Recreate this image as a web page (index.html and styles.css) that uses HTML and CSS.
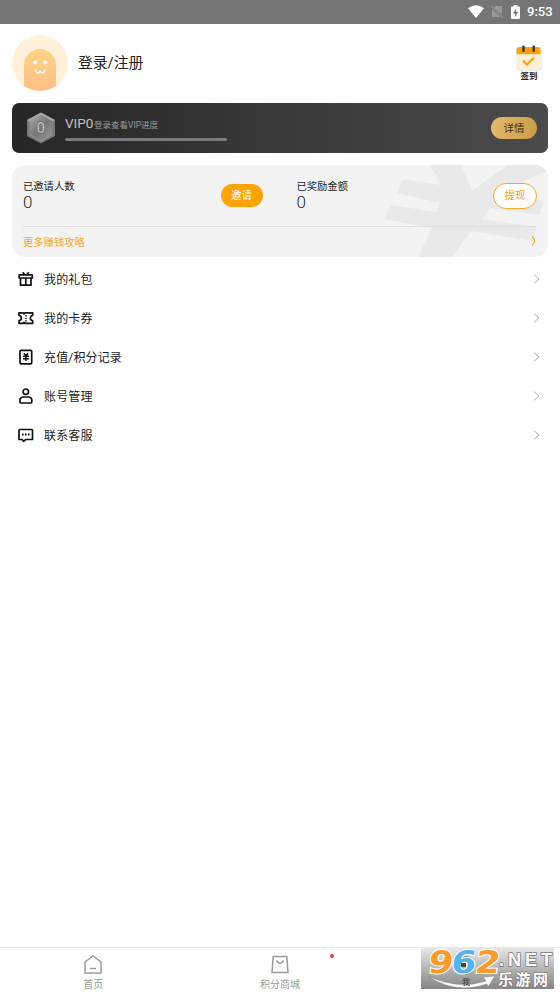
FILE: index.html
```html
<!DOCTYPE html>
<html lang="zh-CN">
<head>
<meta charset="utf-8">
<title>我的</title>
<link rel="stylesheet" href="styles.css">
</head>
<body>
<div class="screen">
  <header class="status">
    <svg width="16" height="13" viewBox="0 0 16 13"><path d="M0 3.2Q8-2.8 16 3.2L8 13Z" fill="#fff"/></svg>
    <svg class="sim" width="12" height="13" viewBox="0 0 12 13"><path d="M4.500 1H11V9.500L3 2.500ZM1 4L9.500 12H1Z" fill="#999"/><path d="M.3 1L11.700 12.500" stroke="#aaa" stroke-width="1"/></svg>
    <svg class="battery" width="9" height="14" viewBox="0 0 9 14"><path d="M2.700 0H6.300V1.500H8Q9 1.500 9 2.500V13Q9 14 8 14H1Q0 14 0 13V2.500Q0 1.500 1 1.500H2.700Z" fill="#fff"/><path d="M5.200 3.400L2 8.400H4.100V12L7.200 7H5.200Z" fill="#777"/></svg>
    <span class="clock">9:53</span>
  </header>

  <section class="profile">
    <svg class="avatar" width="56" height="56" viewBox="0 0 56 56">
      <defs>
        <linearGradient id="body" x2="0" y2="1"><stop stop-color="#fbd583"/><stop offset="1" stop-color="#fdbd88"/></linearGradient>
        <clipPath id="round"><circle cx="28" cy="28" r="28"/></clipPath>
      </defs>
      <circle cx="28" cy="28" r="28" fill="#fef0d9"/>
      <path d="M12 56V30A16 16 0 0 1 44 30V56Z" fill="url(#body)" clip-path="url(#round)"/>
      <circle cx="23" cy="27.500" r="2" fill="#fff"/><circle cx="33.200" cy="27.500" r="2" fill="#fff"/>
      <path d="M23.500 35Q24 38 26 38T28.200 35.500Q28.500 38 30.500 38T33 35" fill="none" stroke="#fff" stroke-width="1.400" stroke-linecap="round"/>
    </svg>
    <span class="login">登录/注册</span>
    <div class="sign">
      <svg width="26" height="26" viewBox="0 0 26 26"><rect x="1" y="3" width="25" height="23" rx="3" fill="#ededed"/><rect x=".5" y="2" width="24" height="22.500" rx="3" fill="#fef0d8"/><path d="M.5 9.200V5Q.5 2 3.500 2H21.500Q24.500 2 24.500 5V9.200Z" fill="#f9a10c"/><path d="M7.500 1.700V5.800M17.700 1.700V5.800" stroke="#38312a" stroke-width="2.400" stroke-linecap="round"/><path d="M7 15.500L11 19.500L18 12.800" fill="none" stroke="#f9a10c" stroke-width="2.200"/></svg>
      <span>签到</span>
    </div>
  </section>

  <section class="vip">
    <svg class="badge" width="28" height="32" viewBox="0 0 28 32">
      <defs><linearGradient id="steel" x2="1" y2="1"><stop stop-color="#aaa"/><stop offset=".5" stop-color="#777"/><stop offset="1" stop-color="#999"/></linearGradient></defs>
      <path d="M14 .5L28 8V24L14 31.500L0 24V8Z" fill="#777"/>
      <path d="M0 8L14 .5L28 8L25 10L14 4L3 10Z" fill="#a5a5a5"/>
      <path d="M14 3L25.500 9.500V22.500L14 29L2.500 22.500V9.500Z" fill="url(#steel)"/>
      <path d="M2.500 22.500L14 29L25.500 22.500" fill="none" stroke="#999"/>
      <text x="13.800" y="20.500" text-anchor="middle" class="badge-number">0</text>
    </svg>
    <div class="vip-info">
      <div class="vip-line"><span class="vip-level">VIP0</span><span class="vip-note">登录查看VIP进度</span></div>
      <div class="track"></div>
    </div>
    <span class="detail">详情</span>
  </section>

  <section class="earn">
    <svg class="yen" width="536" height="92" viewBox="12 165 536 92"><path d="M430 165H461L472 191L508 165H548V170L500 193L543 201L540 215L490 208L482 219L537 227L533 241L471 231L452 257H418L432 228L384 219L391 205L436 212L440 203L397 193L403 179L441 185Z" fill="#e9e9e9"/></svg>
    <div class="stats">
      <div class="stat invited"><span class="label">已邀请人数</span><span class="number">0</span></div>
      <span class="pill invite">邀请</span>
      <div class="stat reward"><span class="label">已奖励金额</span><span class="number">0</span></div>
      <span class="pill withdraw">提现</span>
    </div>
    <div class="more"><span>更多赚钱攻略</span><svg width="5" height="10" viewBox="0 0 5 10"><path d="M1 .5Q3.800 3.500 3.800 5T1 9.500" fill="none" stroke="#f9a62a" stroke-width="1.100"/></svg></div>
  </section>

  <nav class="menu">
    <div class="row"><svg class="icon" width="16" height="16" viewBox="0 0 16 16"><path d="M1.200 3.800H14.300V7H1.200ZM2.500 7V14.200H13V7M7.800 7V14.200M4.800 1.300L6.500 3.600M10.700 1.300L9 3.600"/></svg><span>我的礼包</span><svg class="arrow" width="7" height="10" viewBox="0 0 7 10"><path d="M1 .7L6 5L1 9.300"/></svg></div>
    <div class="row"><svg class="icon" width="16" height="16" viewBox="0 0 16 16"><path d="M1 2.800H5L6 3.800L7 2.800H14.700V5.200Q12.300 6 12.300 8T14.700 10.800V13.300H7L6 12.300L5 13.300H1V10.800Q3.400 10 3.400 8T1 5.200Z"/><path d="M8 5.200V6.600M8 8V9M8 10.200V11.500"/></svg><span>我的卡券</span><svg class="arrow" width="7" height="10" viewBox="0 0 7 10"><path d="M1 .7L6 5L1 9.300"/></svg></div>
    <div class="row"><svg class="icon" width="16" height="16" viewBox="0 0 16 16"><rect x="2" y="1.300" width="11.700" height="13.500" rx="1"/><path d="M5.800 4.300L8 6.500L10.200 4.300M5 7.300H11M5 9.700H11M8 6.500V12" stroke-width="1.500"/></svg><span>充值/积分记录</span><svg class="arrow" width="7" height="10" viewBox="0 0 7 10"><path d="M1 .7L6 5L1 9.300"/></svg></div>
    <div class="row"><svg class="icon" width="16" height="16" viewBox="0 0 16 16"><circle cx="7.800" cy="3.700" r="2.700"/><path d="M5 9H10.800Q13.800 9.300 13.800 12V14Q13.800 15 12.800 15H3Q2 15 2 14V12Q2 9.300 5 9Z"/></svg><span>账号管理</span><svg class="arrow" width="7" height="10" viewBox="0 0 7 10"><path d="M1 .7L6 5L1 9.300"/></svg></div>
    <div class="row"><svg class="icon" width="16" height="16" viewBox="0 0 16 16"><path d="M1.800 2.500H13.700Q14.500 2.500 14.500 3.300V12.500H7.600L5.800 14.300L4 12.500H1V3.300Q1 2.500 1.800 2.500Z"/><path d="M4 7.500H5.600M7 7.500H8.600M10 7.500H11.600" stroke-width="1.800"/></svg><span>联系客服</span><svg class="arrow" width="7" height="10" viewBox="0 0 7 10"><path d="M1 .7L6 5L1 9.300"/></svg></div>
  </nav>

  <footer class="tabs">
    <div class="tab"><svg width="18" height="19" viewBox="0 0 18 19"><path d="M1 7L9 1L17 7V18H1ZM6 13.500H12"/></svg><span>首页</span></div>
    <div class="tab"><svg width="18" height="19" viewBox="0 0 18 19"><path d="M2.200 1.500H15.800L17 17.500H1ZM5.500 5.500Q9 11 12.500 5.500"/></svg><span>积分商城</span><i class="dot"></i></div>
    <div class="tab"></div>
    <svg class="site-mark" width="133" height="41" viewBox="421 948 133 41">
      <defs>
        <linearGradient id="shade" x2="0" y2="1"><stop stop-color="#e6e6e6"/><stop offset="1" stop-color="#858585"/></linearGradient>
      </defs>
      <rect x="421" y="948" width="133" height="41" fill="url(#shade)"/>
      <circle cx="466" cy="965" r="8" fill="none" stroke="#666" stroke-width="1.500"/>
      <path d="M428 976Q458 990 486 981L483 977L495 976L488 987L487 984Q455 995 428 976Z" fill="#f7f7f7" stroke="#888" stroke-width=".6"/>
      <text x="462" y="985" class="hidden-tab">我</text>
      <g class="digits" transform="translate(427 973) skewX(-8)"><text x="0" y="0" textLength="25" lengthAdjust="spacingAndGlyphs" fill="#fa9a2b">9</text><text x="23" y="0" textLength="25" lengthAdjust="spacingAndGlyphs" fill="#58b2e7">6</text><text x="47" y="0" textLength="25" lengthAdjust="spacingAndGlyphs" fill="#fa9a2b">2</text></g>
      <rect x="461" y="963" width="5" height="4" fill="#514527"/>
      <text x="499" y="966" textLength="53" class="net">.NET</text>
      <text x="498" y="984.500" textLength="50" class="site-name">乐游网</text>
    </svg>
  </footer>
</div>
</body>
</html>
```

FILE: styles.css
```css
* { box-sizing: border-box; }
body { margin: 0; background: #fff; color: #222; font-family: Roboto, "Noto Sans CJK SC", sans-serif; }
svg { display: block; flex: none; }
.screen { height: 995px; padding-bottom: 6px; display: flex; flex-direction: column; overflow: hidden; }

.status { height: 24px; flex: none; background: #757575; display: flex; align-items: center; justify-content: flex-end; padding-right: 7px; }
.status svg { margin-bottom: 1px; }
.sim { margin-left: 7px; }
.battery { margin-left: 8px; }
.clock { width: 26px; margin-left: 7px; font-size: 13px; line-height: 24px; font-weight: 500; color: #fff; }

.profile { height: 79px; flex: none; display: flex; align-items: center; padding: 0 18px 2px 12px; }
.login { margin-left: 10px; padding-top: 1px; font-size: 14.8px; line-height: 20px; }
.sign { margin-left: auto; margin-top: 2px; width: 26px; display: flex; flex-direction: column; align-items: center; font-size: 8.5px; line-height: 11px; font-weight: 600; }

.vip { height: 50px; flex: none; margin: 0 12px; padding: 0 11px 0 15px; display: flex; align-items: center; border-radius: 7px; background: linear-gradient(90deg, #262626, #4b4b4b); }
.badge-number { font-size: 15px; font-weight: 500; fill: #bbb; stroke: #555; stroke-width: 1; paint-order: stroke; }
.vip-info { margin-left: 10px; margin-top: -2px; }
.vip-line { height: 19px; display: flex; align-items: baseline; line-height: 19px; }
.vip-level { width: 28px; font-size: 13.5px; color: #c4c4c4; font-weight: 400; }
.vip-note { margin-left: 1px; font-size: 8.5px; color: #999; }
.track { width: 162px; height: 3px; margin-top: 5px; border-radius: 2px; background: #7b7b7b; }
.detail { width: 46px; height: 22px; margin-left: auto; border-radius: 11px; background: linear-gradient(100deg, #e5ba70, #c99c48); color: #3d2c11; font-size: 10.5px; line-height: 24px; text-align: center; }

.earn { position: relative; height: 92px; flex: none; margin: 12px 12px 0; padding: 0 12px 0 11px; border-radius: 13px; background: #f3f3f3; overflow: hidden; }
.yen { position: absolute; inset: 0; }
.stats { position: relative; height: 62px; display: flex; align-items: center; border-bottom: 1px solid #dedede; }
.stat { display: flex; flex-direction: column; }
.invited { width: 198px; }
.reward { width: 197px; margin-left: 34px; }
.label { font-size: 10.3px; line-height: 14px; padding-top: 1px; }
.number { font-size: 17px; line-height: 16px; padding-bottom: 2px; font-weight: 300; color: #222; }
.pill { border-radius: 13px; font-size: 10.3px; text-align: center; }
.invite { width: 42px; height: 23px; line-height: 24px; background: #fea305; color: #fff; }
.withdraw { width: 44px; height: 26px; margin-right: -1px; line-height: 24px; border: 1px solid #f9a62a; background: #fff; color: #f79a13; }
.more { position: relative; height: 28px; display: flex; align-items: center; justify-content: space-between; font-size: 10.3px; color: #f9a62a; }

.menu { margin-top: 2px; }
.row { height: 39px; display: flex; align-items: center; padding: 0 20px 0 18px; font-size: 12px; letter-spacing: .15px; }
.row span { margin-left: 10px; }
.icon { fill: none; stroke: #111; stroke-width: 1.7; stroke-linejoin: round; }
.arrow { margin-left: auto; fill: none; stroke: #aaa; stroke-width: 1; }

.tabs { position: relative; height: 42px; flex: none; margin-top: auto; display: grid; grid-template-columns: repeat(3, 1fr); border-top: 1px solid #e6e6e6; }
.tab { position: relative; padding-top: 7px; display: flex; flex-direction: column; align-items: center; font-size: 10px; line-height: 15px; color: #999; }
.tab svg { margin-bottom: 3px; fill: none; stroke: #999; stroke-width: 1.5; }
.dot { position: absolute; left: 143px; top: 6px; width: 4px; height: 4px; border-radius: 50%; background: #e0403a; }
.site-mark { position: absolute; right: 6px; top: 0; }
.digits text { font: bold 31px "DejaVu Sans", sans-serif; stroke: #fff; stroke-width: 2; paint-order: stroke; }
.net { font: bold 18px "Liberation Sans", sans-serif; fill: #fff; stroke: #777; stroke-width: 1.5; paint-order: stroke; }
.site-name { font: bold 15px "Noto Sans CJK SC", sans-serif; fill: #fff; stroke: #777; stroke-width: 1.2; paint-order: stroke; }
.hidden-tab { font-size: 8px; fill: #333; }
```
